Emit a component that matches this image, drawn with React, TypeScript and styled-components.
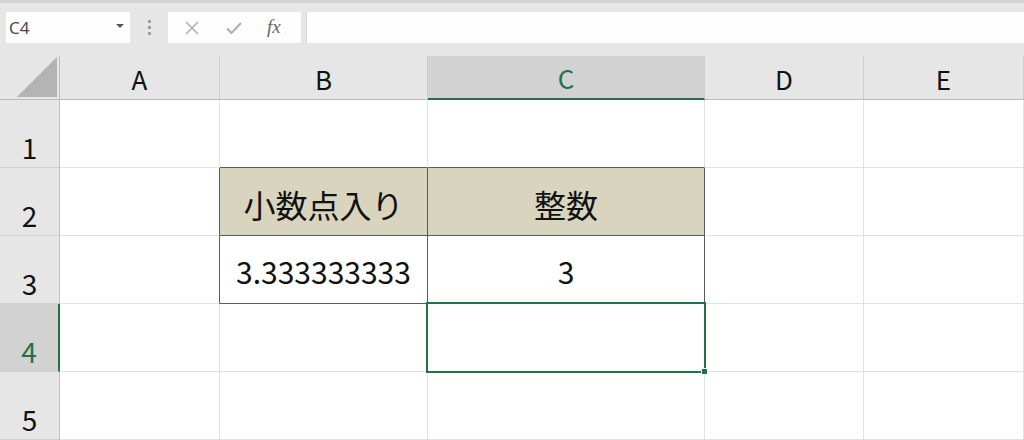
import React from 'react';
import styled, { createGlobalStyle } from 'styled-components';

const GREEN = '#217346';
const GRID = '#e1e1e1';
const BOX = '#5a5a5a';

const columns = ['A', 'B', 'C', 'D', 'E'];
const rows = [1, 2, 3, 4, 5];

const values: Record<string, string> = {
  B2: '小数点入り',
  C2: '整数',
  B3: '3.333333333',
  C3: '3',
};
const filled = ['B2', 'C2'];
const boxed = ['B2', 'C2', 'B3', 'C3'];
const selected = { col: 'C', row: 4 };

const GlobalStyle = createGlobalStyle`
  html, body {
    margin: 0;
    padding: 0;
    background: #fff;
    overflow: hidden;
  }
  body {
    font-family: "Noto Sans CJK JP", "Liberation Sans", sans-serif;
  }
`;

const Screen = styled.div`
  width: 1024px;
  height: 440px;
  display: flex;
  flex-direction: column;
  overflow: hidden;
`;

const FormulaBar = styled.div`
  flex-shrink: 0;
  height: 56px;
  box-sizing: border-box;
  background: #e6e6e6;
  border-top: 3px solid #d3d3d3;
  padding: 9px 0 13px 6px;
  display: flex;
  align-items: stretch;
`;

const NameBox = styled.div`
  width: 124px;
  background: #fdfdfd;
  display: flex;
  align-items: center;
  justify-content: space-between;
  padding: 0 6px 0 3px;
  box-sizing: border-box;
  font-family: "Open Sans", "Noto Sans", sans-serif;
  font-size: 17px;
  color: #444;
`;

const DropArrow = styled.span`
  width: 0;
  height: 0;
  border-left: 4px solid transparent;
  border-right: 4px solid transparent;
  border-top: 4px solid #555;
  margin-bottom: 3px;
`;

const Grip = styled.div`
  width: 38px;
  display: flex;
  flex-direction: column;
  align-items: center;
  justify-content: center;
  gap: 3px;
`;

const Dot = styled.span`
  width: 3px;
  height: 3px;
  background: #a0a0a0;
`;

const ButtonBox = styled.div`
  width: 133px;
  background: #fdfdfd;
  display: flex;
  align-items: center;
  justify-content: space-around;
  padding: 0 8px 0 4px;
  box-sizing: border-box;
`;

const FxLabel = styled.span`
  font-family: "Liberation Serif", serif;
  font-style: italic;
  font-size: 19px;
  color: #666;
  margin-top: -2px;
`;

const FormulaInput = styled.div`
  flex: 1;
  margin-left: 5px;
  background: #fdfdfd;
  border-left: 1px solid #d8d8d8;
`;

const Sheet = styled.div`
  flex-shrink: 0;
  display: grid;
  grid-template-columns: 60px 160px 208px 277px 159px 1fr;
  grid-template-rows: 44px repeat(5, 68px);
`;

const Corner = styled.div`
  background: #e6e6e6;
  border-right: 1px solid #bfbfbf;
  border-bottom: 1px solid #bababa;
  box-sizing: border-box;
  display: flex;
  align-items: flex-end;
  justify-content: flex-end;
  padding: 0 2px 2px 0;
`;

const ColHead = styled.div<{ $active: boolean }>`
  background: ${(p) => (p.$active ? '#d2d2d2' : '#e6e6e6')};
  border-right: 1px solid #cdcdcd;
  border-bottom: ${(p) => (p.$active ? `2px solid ${GREEN}` : '1px solid #bababa')};
  box-sizing: border-box;
  display: flex;
  align-items: center;
  justify-content: center;
  padding-top: 2px;
  font-size: 26px;
  line-height: 1;
  color: ${(p) => (p.$active ? GREEN : '#111')};
`;

const RowHead = styled.div<{ $active: boolean }>`
  background: ${(p) => (p.$active ? '#d2d2d2' : '#e6e6e6')};
  border-right: ${(p) => (p.$active ? `2px solid ${GREEN}` : '1px solid #bfbfbf')};
  border-bottom: 1px solid #d0d0d0;
  box-sizing: border-box;
  display: flex;
  align-items: flex-end;
  justify-content: center;
  padding-bottom: 6px;
  font-size: 28px;
  line-height: 1;
  color: ${(p) => (p.$active ? GREEN : '#111')};
`;

const Cell = styled.div<{ $right: string; $bottom: string; $fill: boolean; $cjk: boolean }>`
  position: relative;
  background: ${(p) => (p.$fill ? '#d9d4bd' : '#fff')};
  border-right: 1px solid ${(p) => p.$right};
  border-bottom: 1px solid ${(p) => p.$bottom};
  box-sizing: border-box;
  display: flex;
  align-items: center;
  justify-content: center;
  padding-top: ${(p) => (p.$cjk ? '4px' : '2px')};
  font-size: ${(p) => (p.$cjk ? '32px' : '30px')};
  line-height: 1;
  color: #111;
  white-space: nowrap;
`;

const Selection = styled.div`
  position: absolute;
  z-index: 2;
  left: -2px;
  top: -2px;
  right: -2px;
  bottom: -2px;
  border: 2px solid ${GREEN};
  pointer-events: none;
`;

const FillHandle = styled.span`
  position: absolute;
  right: -4px;
  bottom: -4px;
  width: 5px;
  height: 5px;
  background: ${GREEN};
  border: 1px solid #fff;
`;

const inBox = (col: string, row: number) => boxed.includes(`${col}${row}`);

const App: React.FC = () => {
  return (
    <Screen>
      <GlobalStyle />
      <FormulaBar>
        <NameBox>
          C4
          <DropArrow />
        </NameBox>
        <Grip>
          <Dot />
          <Dot />
          <Dot />
        </Grip>
        <ButtonBox>
          <svg width="16" height="16" viewBox="0 0 16 16">
            <path d="M2 2 L14 14 M14 2 L2 14" stroke="#b0b0b0" strokeWidth="1.6" fill="none" />
          </svg>
          <svg width="18" height="16" viewBox="0 0 18 16">
            <path d="M2 8.5 L6.5 13 L16 3" stroke="#b0b0b0" strokeWidth="2.2" fill="none" />
          </svg>
          <FxLabel>fx</FxLabel>
        </ButtonBox>
        <FormulaInput />
      </FormulaBar>

      <Sheet>
        <Corner>
          <svg width="40" height="40" viewBox="0 0 40 40">
            <polygon points="0,40 40,40 40,0" fill="#b4b4b4" />
          </svg>
        </Corner>
        {columns.map((c) => (
          <ColHead key={c} $active={selected.col === c}>
            {c}
          </ColHead>
        ))}

        {rows.map((r) => (
          <React.Fragment key={r}>
            <RowHead $active={selected.row === r}>{r}</RowHead>
            {columns.map((c, i) => {
              const id = `${c}${r}`;
              const next = columns[i + 1];
              const right = inBox(c, r) || (next && inBox(next, r)) ? BOX : GRID;
              const bottom = inBox(c, r) || inBox(c, r + 1) ? BOX : GRID;
              const text = values[id] ?? '';
              const isSelected = selected.col === c && selected.row === r;
              return (
                <Cell
                  key={id}
                  $right={right}
                  $bottom={bottom}
                  $fill={filled.includes(id)}
                  $cjk={/[^\x00-\x7f]/.test(text)}
                >
                  {text}
                  {isSelected && (
                    <Selection>
                      <FillHandle />
                    </Selection>
                  )}
                </Cell>
              );
            })}
          </React.Fragment>
        ))}
      </Sheet>
    </Screen>
  );
};

export default App;
